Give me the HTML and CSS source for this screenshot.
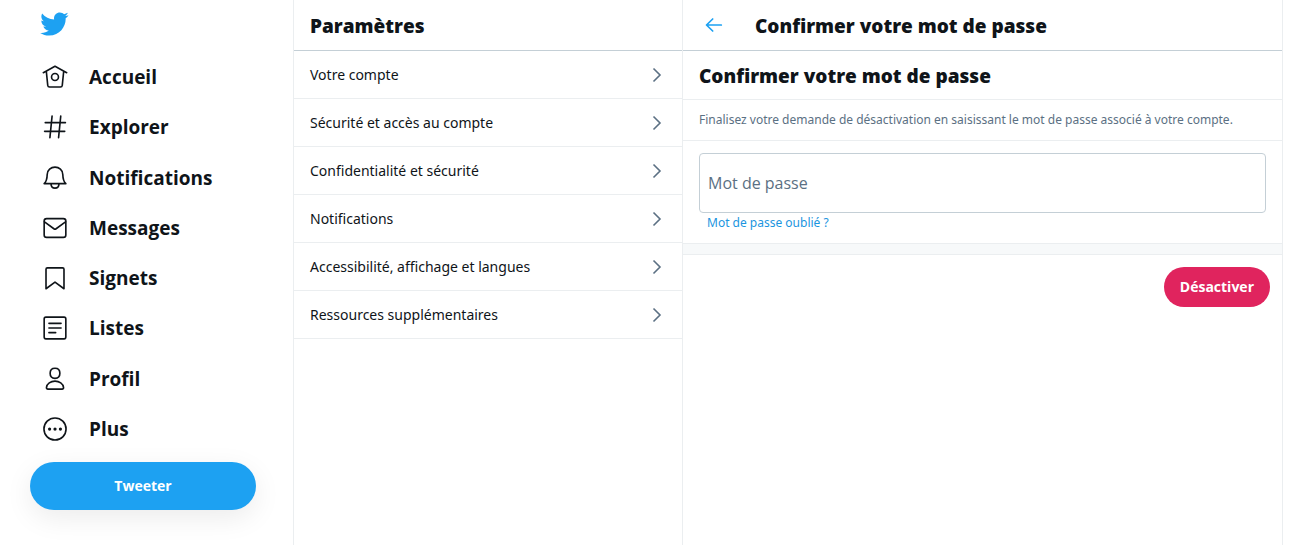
FILE: index.html
```html
<!DOCTYPE html>
<html lang="fr">
<head>
<meta charset="utf-8">
<meta name="viewport" content="width=device-width, initial-scale=1">
<title>Confirmer votre mot de passe / Twitter</title>
<link rel="stylesheet" href="styles.css">
</head>
<body>
<div class="layout">
  <header class="sidebar">
    <a class="logo" href="#" aria-label="Twitter">
      <svg class="logo-icon" viewBox="0 0 24 24" aria-hidden="true"><path d="M23.643 4.937c-.835.37-1.732.62-2.675.733.962-.576 1.7-1.49 2.048-2.578-.9.534-1.897.922-2.958 1.13-.85-.904-2.06-1.47-3.4-1.47-2.572 0-4.658 2.086-4.658 4.66 0 .364.042.718.12 1.06-3.873-.195-7.304-2.05-9.602-4.868-.4.69-.63 1.49-.63 2.342 0 1.616.823 3.043 2.072 3.878-.764-.025-1.482-.234-2.11-.583v.06c0 2.257 1.605 4.14 3.737 4.568-.392.106-.803.162-1.227.162-.3 0-.593-.028-.877-.082.593 1.85 2.313 3.198 4.352 3.234-1.595 1.25-3.604 1.995-5.786 1.995-.376 0-.747-.022-1.112-.065 2.062 1.323 4.51 2.093 7.14 2.093 8.57 0 13.255-7.098 13.255-13.254 0-.2-.005-.402-.014-.602.91-.658 1.7-1.477 2.323-2.41z"/></svg>
    </a>
    <nav class="nav" aria-label="Principal">
      <a class="nav-link" href="#"><svg class="nav-icon" viewBox="0 0 24 24" aria-hidden="true"><path d="M1.200 8L12 2.100l10.800 5.900M4 6.900l1.300 12.900q.2 1.400 1.600 1.400h10.200q1.400 0 1.600-1.400L20 6.900"/><circle cx="12" cy="12" r="3.200"/></svg>Accueil</a>
      <a class="nav-link" href="#"><svg class="nav-icon" viewBox="0 0 24 24" aria-hidden="true"><path d="M9.300 1.900L7.300 21.800M17.300 1.900l-2 19.900M3 8h18.600M2.400 16H21"/></svg>Explorer</a>
      <a class="nav-link" href="#"><svg class="nav-icon" viewBox="0 0 24 24" aria-hidden="true"><path d="M2 17.200C4.300 15 4.700 13 4.800 8.700C4.900 4.700 8.200 2 12 2s7.100 2.700 7.200 6.700C19.300 13 19.700 15 22 17.200zM8.300 17.400c.1 2.400 1.600 4 3.700 4s3.600-1.600 3.700-4"/></svg>Notifications</a>
      <a class="nav-link" href="#"><svg class="nav-icon" viewBox="0 0 24 24" aria-hidden="true"><rect x="2" y="3.300" width="20" height="17.400" rx="2.300"/><path d="M2.300 6.300L11.300 12.900q.7.500 1.400 0L21.700 6.300"/></svg>Messages</a>
      <a class="nav-link" href="#"><svg class="nav-icon" viewBox="0 0 24 24" aria-hidden="true"><path d="M3.700 21.900V4q0-1.300 1.300-1.300h14q1.300 0 1.300 1.300v17.900L12 15.800z"/></svg>Signets</a>
      <a class="nav-link" href="#"><svg class="nav-icon" viewBox="0 0 24 24" aria-hidden="true"><rect x="2" y="2" width="20" height="20" rx="1.600"/><path d="M6.400 7.700h11.200M6.400 12h11.200M6.400 16.300h6.200"/></svg>Listes</a>
      <a class="nav-link" href="#"><svg class="nav-icon" viewBox="0 0 24 24" aria-hidden="true"><path d="M12 11.400c-2.800 0-4.500-1.900-4.500-4.600C7.500 3.900 9 2.100 12 2.100s4.500 1.800 4.500 4.700c0 2.700-1.700 4.600-4.500 4.600zM5.500 21.300h13q1.500 0 1.400-1.400C19.500 16.300 16 14 12 14s-7.500 2.300-7.900 5.900q-.1 1.400 1.400 1.400z"/></svg>Profil</a>
      <button class="nav-link" type="button"><svg class="nav-icon" viewBox="0 0 24 24" aria-hidden="true"><circle cx="12" cy="12" r="10.200"/><g class="dots"><circle cx="7" cy="12" r="1.500"/><circle cx="12" cy="12" r="1.500"/><circle cx="17" cy="12" r="1.500"/></g></svg>Plus</button>
    </nav>
    <button class="tweet" type="button">Tweeter</button>
  </header>

  <section class="settings">
    <h2 class="bar">Paramètres</h2>
    <nav aria-label="Paramètres">
      <a class="row" href="#">Votre compte<svg class="chevron" viewBox="0 0 10 16" aria-hidden="true"><path d="M1.500 1.500L8 8l-6.500 6.500"/></svg></a>
      <a class="row" href="#">Sécurité et accès au compte<svg class="chevron" viewBox="0 0 10 16" aria-hidden="true"><path d="M1.500 1.500L8 8l-6.500 6.500"/></svg></a>
      <a class="row" href="#">Confidentialité et sécurité<svg class="chevron" viewBox="0 0 10 16" aria-hidden="true"><path d="M1.500 1.500L8 8l-6.500 6.500"/></svg></a>
      <a class="row" href="#">Notifications<svg class="chevron" viewBox="0 0 10 16" aria-hidden="true"><path d="M1.500 1.500L8 8l-6.500 6.500"/></svg></a>
      <a class="row" href="#">Accessibilité, affichage et langues<svg class="chevron" viewBox="0 0 10 16" aria-hidden="true"><path d="M1.500 1.500L8 8l-6.500 6.500"/></svg></a>
      <a class="row" href="#">Ressources supplémentaires<svg class="chevron" viewBox="0 0 10 16" aria-hidden="true"><path d="M1.500 1.500L8 8l-6.500 6.500"/></svg></a>
    </nav>
  </section>

  <main class="detail">
    <div class="bar">
      <button class="back" type="button" aria-label="Retour"><svg class="back-icon" viewBox="0 0 18 16" aria-hidden="true"><path d="M7.700 2L1.500 8l6.200 6M1.700 8h14.600"/></svg></button>
      <h2 class="title">Confirmer votre mot de passe</h2>
    </div>
    <h3 class="subtitle">Confirmer votre mot de passe</h3>
    <p class="hint">Finalisez votre demande de désactivation en saisissant le mot de passe associé à votre compte.</p>
    <form>
      <div class="fields">
        <input class="password" type="password" placeholder="Mot de passe" aria-label="Mot de passe">
        <a class="forgot" href="#">Mot de passe oublié ?</a>
      </div>
      <div class="separator"></div>
      <div class="actions"><button class="deactivate" type="submit">Désactiver</button></div>
    </form>
  </main>
</div>
</body>
</html>
```
FILE: styles.css
```css
* { box-sizing: border-box; }

body {
  margin: 0;
  background: #fff;
  color: #0f1419;
  font-family: "Open Sans", "Noto Sans", sans-serif;
  font-size: 14px;
  line-height: 20px;
}

h2, h3, p { margin: 0; }
a { color: inherit; text-decoration: none; }
button, input { font: inherit; color: inherit; }
button { border: 0; padding: 0; background: none; cursor: pointer; }
svg { display: block; flex: none; }

.layout {
  display: grid;
  grid-template-columns: 293px 389px minmax(0, 1fr);
  min-height: 100vh;
  padding-right: 13px;
}

.sidebar { padding: 9px 37px 20px 30px; }

.logo { display: block; width: 30px; margin: 0 9px; }
.logo-icon { width: 30px; height: 30px; fill: #1da1f2; }

.nav {
  display: flex;
  flex-direction: column;
  justify-content: space-between;
  min-height: 423px;
  padding: 13px 12px 8px;
}
.nav-link {
  display: flex;
  align-items: center;
  gap: 21px;
  height: 50px;
  font-size: 19px;
  font-weight: 700;
}
.nav-icon {
  width: 26px;
  height: 26px;
  fill: none;
  stroke: #0f1419;
  stroke-width: 1.5;
  stroke-linecap: round;
  stroke-linejoin: round;
}
.dots { fill: #0f1419; stroke: none; }

.tweet {
  width: 100%;
  height: 48px;
  border-radius: 24px;
  background: #1da1f2;
  color: #fff;
  font-weight: 700;
  box-shadow: 0 8px 28px rgba(0, 0, 0, 0.08);
}

.settings { border-left: 1px solid #ebeef0; }
.detail { border: 1px solid #ebeef0; border-width: 0 1px; }

.bar {
  display: flex;
  align-items: center;
  height: 51px;
  padding: 2px 16px 0;
  border-bottom: 1px solid #c4cfd6;
}
.bar, .title, .subtitle { font-size: 19px; font-weight: 800; line-height: 24px; }

.row {
  display: flex;
  align-items: center;
  justify-content: space-between;
  height: 48px;
  padding: 0 20px 0 16px;
  border-bottom: 1px solid #ebeef0;
}
.row, .hint, .forgot { font-family: "Noto Sans", "Open Sans", sans-serif; }
.chevron {
  width: 10px;
  height: 16px;
  fill: none;
  stroke: #5b7083;
  stroke-width: 1.6;
}

.back { margin-right: 32px; padding: 3px 0 5px 6px; }
.back-icon {
  width: 18px;
  height: 16px;
  fill: none;
  stroke: #1da1f2;
  stroke-width: 1.7;
  stroke-linecap: round;
  stroke-linejoin: round;
}

.subtitle { padding: 13px 16px 11px; border-bottom: 1px solid #ebeef0; }
.hint {
  padding: 10px 16px;
  border-bottom: 1px solid #ebeef0;
  color: #5b7083;
  font-size: 12px;
}

.fields { display: flex; flex-direction: column; align-items: flex-start; padding: 12px 16px 10px; }
.password {
  width: 100%;
  height: 60px;
  padding: 0 8px;
  border: 1px solid #c4cfd6;
  border-radius: 4px;
  background: #fff;
  font-size: 16px;
}
.password::placeholder { color: #5b7083; opacity: 1; }
.forgot { margin-left: 8px; color: #1b95e0; font-size: 12px; }

.separator {
  height: 12px;
  border: 1px solid #ebeef0;
  border-width: 1px 0;
  background: #f7f9fa;
}
.actions { display: flex; justify-content: flex-end; padding: 12px; }
.deactivate {
  height: 40px;
  padding: 0 16px;
  border-radius: 20px;
  background: #e0245e;
  color: #fff;
  font-weight: 700;
}
```
